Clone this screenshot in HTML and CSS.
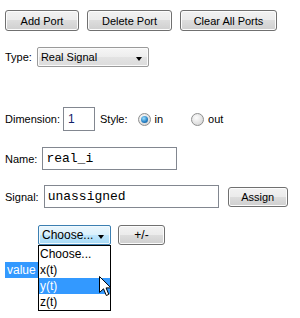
FILE: index.html
```html
<!DOCTYPE html>
<html>
<head>
  <title>Port Editor</title>
  <link rel="stylesheet" href="styles.css">
</head>
<body>
  <div class="panel">
    <div class="row buttons">
      <button class="btn btn-add">Add Port</button>
      <button class="btn btn-del">Delete Port</button>
      <button class="btn btn-clear">Clear All Ports</button>
    </div>

    <div class="row type-row">
      <label class="lbl">Type:</label>
      <div class="combo combo-type"><span>Real Signal</span><i class="arrow"></i></div>
    </div>

    <div class="row dim-row">
      <label class="lbl dim-lbl">Dimension:</label>
      <input class="field field-dim" value="1">
      <label class="lbl style-lbl">Style:</label>
      <span class="radio checked"></span><span class="radio-text">in</span>
      <span class="radio radio-out"></span><span class="radio-text">out</span>
    </div>

    <div class="row name-row">
      <label class="lbl">Name:</label>
      <input class="field mono field-name" value="real_i">
    </div>

    <div class="row signal-row">
      <label class="lbl">Signal:</label>
      <input class="field mono field-signal" value="unassigned">
      <button class="btn btn-assign">Assign</button>
    </div>

    <div class="row choose-row">
      <div class="dropdown">
        <div class="combo combo-open"><span>Choose...</span><i class="arrow"></i></div>
        <ul class="list">
          <li>Choose...</li>
          <li>x(t)</li>
          <li class="hover">y(t)</li>
          <li>z(t)</li>
        </ul>
        <svg class="cursor" width="13" height="21" viewBox="0 0 13 21">
          <path d="M0.5 0.5 L0.5 16.5 L4.5 12.8 L7.3 19.5 L9.8 18.4 L7.1 11.9 L12 11.9 Z" fill="#fff" stroke="#000" stroke-width="1"/>
        </svg>
      </div>
      <button class="btn btn-pm">+/-</button>
    </div>

    <div class="row value-row">
      <span class="value-tag">value</span>
    </div>
  </div>
</body>
</html>
```

FILE: styles.css
```css
html, body {
  height: 100%;
}
body {
  margin: 0;
  background: #fff;
  font-family: "Liberation Sans", Arial, sans-serif;
  font-size: 11px;
  color: #000;
}
.panel {
  display: flex;
  flex-direction: column;
  min-height: 318px;
  box-sizing: border-box;
  padding: 10px 5px 0 5px;
}
.row {
  display: flex;
  align-items: center;
}
.buttons {
  gap: 8px;
}
.type-row {
  margin-top: 16px;
}
.dim-row {
  margin-top: 40px;
}
.name-row {
  margin-top: 16px;
}
.signal-row {
  margin-top: 15px;
}
.choose-row {
  margin-top: 17px;
  padding-left: 33px;
  gap: 7px;
  position: relative;
  z-index: 2;
}
.value-row {
  margin-top: 17px;
}

.lbl {
  margin-right: 5px;
}
.dim-lbl {
  margin-right: 3px;
}

.btn {
  height: 21px;
  padding: 0;
  border: 1px solid #707070;
  border-radius: 3px;
  box-shadow: inset 0 0 0 1px #fcfcfc;
  background: linear-gradient(#f2f2f2, #ebebeb 50%, #dddddd 50%, #cfcfcf);
  font-family: "Liberation Sans", Arial, sans-serif;
  font-size: 11px;
  color: #000;
}
.btn-add { width: 74px; }
.btn-del { width: 85px; }
.btn-clear { width: 97px; }
.btn-assign {
  width: 60px;
  height: 20px;
  margin-left: 9px;
}
.btn-pm {
  width: 47px;
  height: 20px;
  font-size: 12px;
}

.combo {
  position: relative;
  box-sizing: border-box;
  height: 20px;
  border: 1px solid #9a9a9a;
  border-radius: 2px;
  background: linear-gradient(#f6f6f6, #ededed 50%, #e3e3e3 50%, #dcdcdc);
  box-shadow: inset 0 0 0 1px #fbfbfb;
  display: flex;
  align-items: center;
  padding-left: 3px;
}
.combo-type {
  width: 112px;
}
.combo-open {
  width: 73px;
  border-color: #3c7fb1;
  background: linear-gradient(#eaf6fd, #d9f0fc 50%, #bee6fd 50%, #a7d9f5);
  box-shadow: inset 0 0 0 1px #f0f9fe;
  font-size: 12px;
}
.arrow {
  position: absolute;
  right: 6px;
  top: 9px;
  border-left: 3.5px solid transparent;
  border-right: 3.5px solid transparent;
  border-top: 4px solid #000;
}

.field {
  box-sizing: border-box;
  border: 1px solid #828790;
  padding: 0 3px;
  font-family: "Liberation Sans", Arial, sans-serif;
  font-size: 12px;
  color: #000;
  background: #fff;
  outline: none;
}
.mono {
  font-family: "Liberation Mono", "Courier New", monospace;
  font-size: 13px;
}
.field-dim {
  width: 32px;
  height: 24px;
  padding-left: 4px;
  color: #10206a;
}
.field-name {
  width: 135px;
  height: 23px;
}
.field-signal {
  width: 175px;
  height: 23px;
}

.style-lbl {
  margin-left: 5px;
  margin-right: 10px;
}
.radio {
  position: relative;
  box-sizing: border-box;
  width: 13px;
  height: 13px;
  border: 1px solid #8e8f8f;
  border-radius: 50%;
  background: radial-gradient(circle at 40% 35%, #fdfdfd, #dcdcdc 70%, #c8c8c8);
}
.radio.checked::after {
  content: "";
  position: absolute;
  left: 2px;
  top: 2px;
  width: 7px;
  height: 7px;
  border-radius: 50%;
  background: radial-gradient(circle at 40% 35%, #9ee0ff, #2a85c8 55%, #0d4a86);
}
.radio-text {
  margin-left: 4px;
}
.radio-out {
  margin-left: 28px;
}

.dropdown {
  position: relative;
}
.list {
  position: absolute;
  left: 0;
  top: 20px;
  width: 73px;
  box-sizing: border-box;
  margin: 0;
  padding: 0;
  list-style: none;
  border: 1px solid #000;
  background: #fff;
  font-size: 12px;
}
.list li {
  height: 16px;
  line-height: 16px;
  padding-left: 1px;
}
.list li.hover {
  background: #3399ff;
  color: #fff;
}
.cursor {
  position: absolute;
  left: 61px;
  top: 51px;
}

.value-tag {
  box-sizing: border-box;
  width: 33px;
  height: 16px;
  line-height: 16px;
  padding-left: 2px;
  white-space: nowrap;
  background: #3399ff;
  color: #fff;
  font-size: 12px;
}
```
